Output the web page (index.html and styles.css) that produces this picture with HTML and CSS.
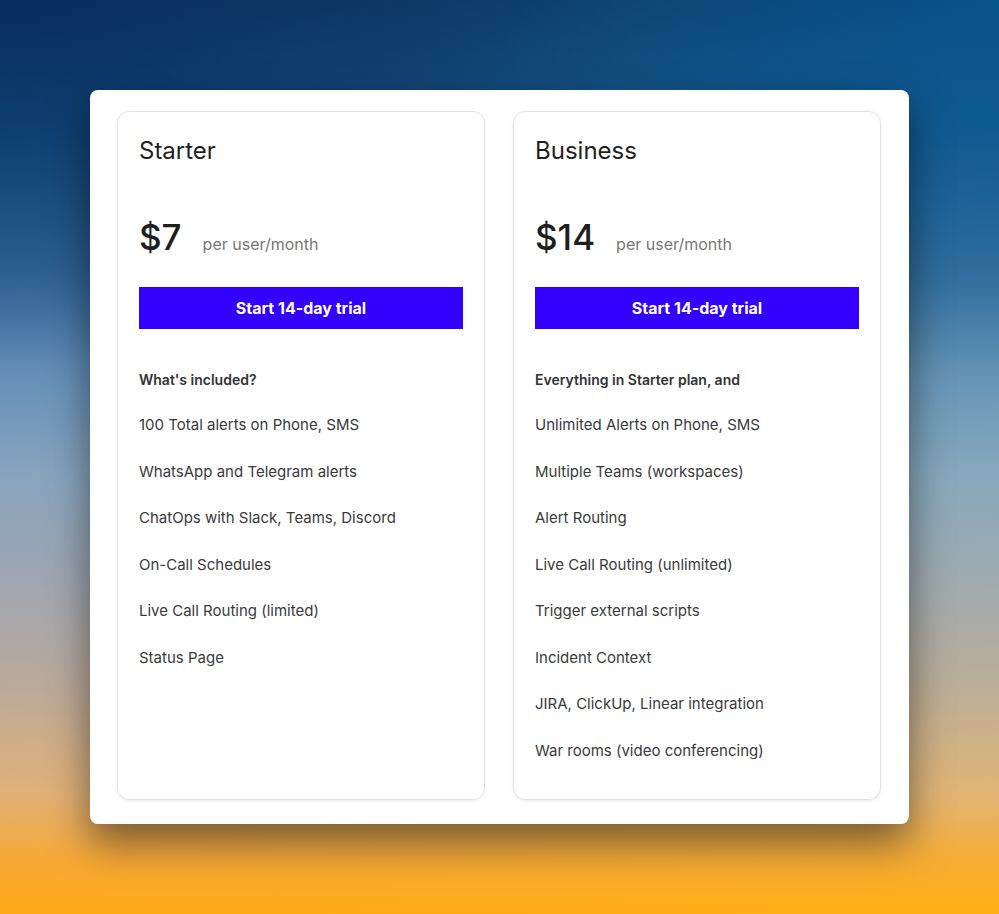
FILE: index.html
```html
<!DOCTYPE html>
<html lang="en">
<head>
<meta charset="utf-8">
<title>Pricing</title>
<link rel="stylesheet" href="styles.css">
</head>
<body>
<div class="stage">
  <div class="panel">
    <section class="card">
      <h2 class="plan-name">Starter</h2>
      <div class="price-row">
        <span class="price">$7</span>
        <span class="per">per user/month</span>
      </div>
      <button class="cta">Start 14-day trial</button>
      <ul class="features">
        <li class="features-head">What's included?</li>
        <li>100 Total alerts on Phone, SMS</li>
        <li>WhatsApp and Telegram alerts</li>
        <li>ChatOps with Slack, Teams, Discord</li>
        <li>On-Call Schedules</li>
        <li>Live Call Routing (limited)</li>
        <li>Status Page</li>
      </ul>
    </section>
    <section class="card">
      <h2 class="plan-name">Business</h2>
      <div class="price-row">
        <span class="price">$14</span>
        <span class="per">per user/month</span>
      </div>
      <button class="cta">Start 14-day trial</button>
      <ul class="features">
        <li class="features-head">Everything in Starter plan, and</li>
        <li>Unlimited Alerts on Phone, SMS</li>
        <li>Multiple Teams (workspaces)</li>
        <li>Alert Routing</li>
        <li>Live Call Routing (unlimited)</li>
        <li>Trigger external scripts</li>
        <li>Incident Context</li>
        <li>JIRA, ClickUp, Linear integration</li>
        <li>War rooms (video conferencing)</li>
      </ul>
    </section>
  </div>
</div>
</body>
</html>
```
FILE: styles.css
```css
* { box-sizing: border-box; }
html, body { margin: 0; padding: 0; }
body {
  font-family: Inter, "Noto Sans", "Liberation Sans", sans-serif;
  width: 999px;
  height: 914px;
  overflow: hidden;
  background:
    radial-gradient(ellipse 65% 40% at 0% 0%, rgba(1, 40, 88, 0.7), rgba(1, 40, 88, 0)),
    radial-gradient(ellipse 60% 40% at 100% 0%, rgba(0, 96, 170, 0.55), rgba(0, 96, 170, 0)),
    linear-gradient(to right, rgba(255, 120, 40, 0.06) 0%, rgba(255, 200, 0, 0.06) 100%),
    linear-gradient(to bottom, #02386e 0%, #0a4f8c 14%, #2a6aa6 30%, #5f93c2 42%, #80a7c8 52%, #9aa9ba 64%, #b9ad9f 76%, #e0b47c 87%, #f6ab38 94%, #ffad14 100%);
}
.stage {
  padding: 90px 90px 0 90px;
}
.panel {
  width: 819px;
  background: #fff;
  border-radius: 8px;
  padding: 21px 28px 24px 27px;
  display: flex;
  gap: 28px;
  box-shadow: 0 18px 40px rgba(0, 0, 0, 0.5);
}
.card {
  flex: 1;
  border: 1px solid #e2e2e6;
  border-radius: 12px;
  padding: 21px 21px 37px 21px;
  box-shadow: 0 1px 3px rgba(0, 0, 0, 0.08);
  display: flex;
  flex-direction: column;
}
.plan-name {
  margin: 0;
  font-size: 24px;
  line-height: 32px;
  font-weight: 420;
  color: #1f1f1f;
  padding-top: 2px;
  height: 32px;
}
.price-row {
  margin-top: 52px;
  display: flex;
  align-items: baseline;
  height: 40px;
}
.price {
  font-size: 35px;
  line-height: 40px;
  font-weight: 480;
  color: #1f1f1f;
}
.per {
  margin-left: 21px;
  font-size: 16px;
  color: #777;
}
.cta {
  margin-top: 30px;
  height: 42px;
  border: none;
  background: #3300ff;
  color: #fff;
  font-family: inherit;
  font-size: 16px;
  font-weight: 700;
  padding: 0;
  width: 100%;
  cursor: pointer;
}
.features {
  list-style: none;
  margin: 41px 0 0 0;
  padding: 0;
  display: flex;
  flex-direction: column;
  gap: 24px;
}
.features li {
  font-size: 15px;
  line-height: 22.5px;
  color: #3a3a3a;
}
.features li.features-head {
  font-size: 14px;
  line-height: 20px;
  font-weight: 600;
  color: #333;
}
```
